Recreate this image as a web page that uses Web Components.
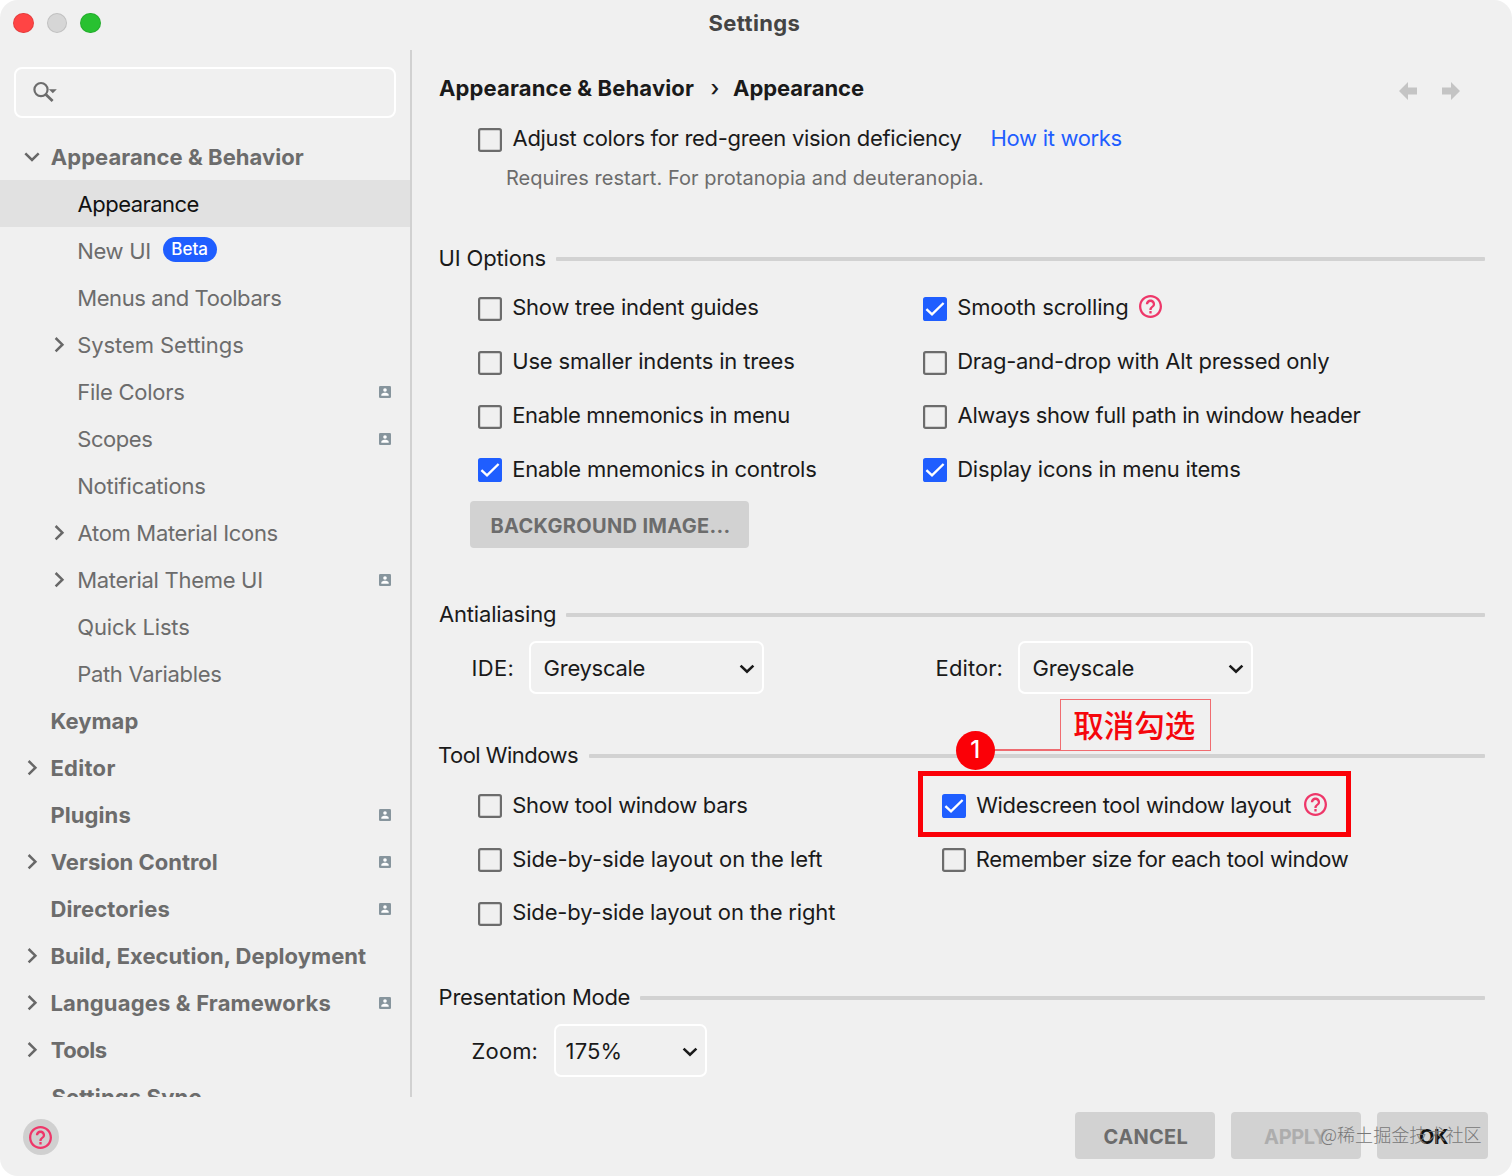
<!DOCTYPE html>
<html lang="en">

<head>
    <meta charset="UTF-8">
    <meta name="viewport" content="width=device-width, initial-scale=1.0">
    <title>Settings</title>
    <style>
        :root {
            --bg: #f0f0f0;
            --text: #1a1a1a;
            --muted: #6c6c6c;
            --line: #d2d2d2;
            --accent: #1f5eff;
            --help: #ee3769;
        }

        body {
            margin: 0;
            background: #fff;
            font: 22px/28px Inter, "Noto Sans CJK SC", sans-serif;
            color: var(--text);
        }

        .checks {
            display: grid;
            grid-template-columns: var(--col, 445px) 1fr;
            grid-auto-rows: 53.8px;
            padding-left: 39.4px;
        }

        .fields {
            display: grid;
            grid-template-columns: 464px 1fr;
            margin-top: 4px;
            padding-left: 33px;
        }
    </style>
</head>

<body>
    <settings-window>
        <text-run slot="title" w="91" style="font-weight:700;color:#444">Settings</text-run>

        <tree-item slot="tree" top open w="253">Appearance &amp; Behavior</tree-item>
        <tree-item slot="tree" selected w="121">Appearance</tree-item>
        <tree-item slot="tree" badge="Beta" w="71">New UI</tree-item>
        <tree-item slot="tree" w="203">Menus and Toolbars</tree-item>
        <tree-item slot="tree" arrow w="165">System Settings</tree-item>
        <tree-item slot="tree" project w="106">File Colors</tree-item>
        <tree-item slot="tree" project w="74">Scopes</tree-item>
        <tree-item slot="tree" w="127">Notifications</tree-item>
        <tree-item slot="tree" arrow w="200">Atom Material Icons</tree-item>
        <tree-item slot="tree" arrow project w="183">Material Theme UI</tree-item>
        <tree-item slot="tree" w="111">Quick Lists</tree-item>
        <tree-item slot="tree" w="143">Path Variables</tree-item>
        <tree-item slot="tree" top w="86">Keymap</tree-item>
        <tree-item slot="tree" top arrow w="64">Editor</tree-item>
        <tree-item slot="tree" top project w="79">Plugins</tree-item>
        <tree-item slot="tree" top arrow project w="166">Version Control</tree-item>
        <tree-item slot="tree" top project w="118">Directories</tree-item>
        <tree-item slot="tree" top arrow w="316">Build, Execution, Deployment</tree-item>
        <tree-item slot="tree" top arrow project w="279">Languages &amp; Frameworks</tree-item>
        <tree-item slot="tree" top arrow w="56">Tools</tree-item>
        <tree-item slot="tree" top w="150">Settings Sync</tree-item>

        <bread-crumb>
            <text-run w="255">Appearance &amp; Behavior</text-run>
            <text-run w="5" style="font-weight:500;margin:0 18px 0 16px">›</text-run>
            <text-run w="131">Appearance</text-run>
        </bread-crumb>

        <div class="checks" style="grid-template-columns:512px 1fr;margin-top:9.4px">
            <check-box w="449">Adjust colors for red-green vision deficiency</check-box>
            <text-run w="130" style="color:var(--accent);align-self:center;margin:-2px 0 0 .6px">How it works</text-run>
        </div>
        <text-run w="476" style="color:var(--muted);font-size:20px;line-height:24px;margin-left:67.3px">Requires restart. For protanopia and deuteranopia.</text-run>

        <section-title w="106" style="margin-top:44.5px">UI Options</section-title>
        <div class="checks" style="margin-top:.9px">
            <check-box w="245">Show tree indent guides</check-box>
            <check-box w="169" checked help>Smooth scrolling</check-box>
            <check-box w="281">Use smaller indents in trees</check-box>
            <check-box w="371">Drag-and-drop with Alt pressed only</check-box>
            <check-box w="276">Enable mnemonics in menu</check-box>
            <check-box w="403">Always show full path in window header</check-box>
            <check-box w="303" checked>Enable mnemonics in controls</check-box>
            <check-box w="282" checked>Display icons in menu items</check-box>
        </div>
        <push-button w="238" style="width:279px;margin:4.3px 0 0 31.4px">BACKGROUND IMAGE...</push-button>

        <section-title w="116" style="margin-top:43.3px">Antialiasing</section-title>
        <div class="fields">
            <combo-box label="IDE:" lw="40" w="100" style="--gap:17px;--box:235px">Greyscale</combo-box>
            <combo-box label="Editor:" lw="65" w="100" style="--gap:17px;--box:235px">Greyscale</combo-box>
        </div>

        <section-title w="139" style="margin-top:38px">Tool Windows</section-title>
        <div class="checks" style="--col:463.6px;margin-top:.6px">
            <check-box w="234">Show tool window bars</check-box>
            <check-box w="315" checked help>Widescreen tool window layout</check-box>
            <check-box w="309">Side-by-side layout on the left</check-box>
            <check-box w="372">Remember size for each tool window</check-box>
            <check-box w="322">Side-by-side layout on the right</check-box>
        </div>

        <section-title w="190" style="margin-top:34px">Presentation Mode</section-title>
        <div class="fields">
            <combo-box label="Zoom:" lw="64" w="54" style="--gap:18px;--box:153px;--pad:10px">175%</combo-box>
        </div>

        <push-button slot="actions" w="84" style="width:139.5px">CANCEL</push-button>
        <push-button slot="actions" w="64" style="width:129.5px;color:#adadad">APPLY</push-button>
        <push-button slot="actions" w="29" style="width:111px;color:#111">OK</push-button>
    </settings-window>

    <step-note number="1">取消勾选</step-note>
    <water-mark>@稀土掘金技术社区</water-mark>

    <template id="windowTemplate">
        <style>
            :host {
                display: grid;
                grid-template: 50px 1047px 79px / 412px 1fr;
                width: 1512px;
                height: 1176px;
                background: var(--bg);
                border-radius: 18px;
                overflow: hidden;
            }

            header {
                grid-column: 1 / -1;
                display: grid;
                grid-template-columns: 1fr auto 1fr;
                align-items: center;
                height: 46px;
            }

            .lights {
                display: flex;
                gap: 13px;
                padding-left: 13px;
            }

            .lights i {
                width: 20.6px;
                height: 20.6px;
                border-radius: 50%;
                box-sizing: border-box;
                border: 1px solid rgba(0, 0, 0, .1);
            }

            header slot {
                display: block;
                padding: 0 5px 1px 0;
            }

            aside {
                border-right: 2px solid #d1d1d1;
                overflow: hidden;
            }

            .search {
                box-sizing: border-box;
                height: 51px;
                margin: 17px 14px 15px;
                border: 2px solid #fff;
                border-radius: 8px;
                padding: 11px 16px;
            }

            svg {
                display: block;
            }

            main {
                padding: 23px 27px 0 27px;
                overflow: hidden;
            }

            footer {
                grid-column: 1 / -1;
                display: flex;
                justify-content: space-between;
                padding: 15px 23.6px 0 22.5px;
            }

            .actions {
                display: flex;
                gap: 16.6px;
            }

            .round {
                display: grid;
                place-items: center;
                width: 36px;
                height: 36px;
                margin-top: 7px;
                border-radius: 50%;
                background: #d0d0d0;
            }

            .round help-icon {
                margin-right: 1px;
            }
        </style>
        <header>
            <div class="lights"><i style="background:#ff4444"></i><i style="background:#d6d6d6"></i><i style="background:#28c131"></i></div>
            <slot name="title"></slot>
        </header>
        <aside>
            <div class="search">
                <svg width="26" height="24" viewBox="0 0 26 24" fill="none" stroke="#6c6c6c">
                    <circle cx="9" cy="9.6" r="6.6" stroke-width="2.2" />
                    <path d="M13.6 14.2 L20.6 21" stroke-width="2.8" />
                    <path d="M16.8 9.2 H24.8 L20.8 13.3 Z" fill="#6c6c6c" stroke="none" />
                </svg>
            </div>
            <slot name="tree"></slot>
        </aside>
        <main>
            <slot></slot>
        </main>
        <footer>
            <div class="round"><help-icon></help-icon></div>
            <div class="actions"><slot name="actions"></slot></div>
        </footer>
    </template>

    <template id="treeTemplate">
        <style>
            :host {
                display: flex;
                align-items: center;
                height: 47px;
                color: var(--muted);
                box-sizing: border-box;
                padding: 0 18.6px 0 50.6px;
            }

            :host([top]) {
                padding-left: 23.8px;
                font-weight: 700;
            }

            :host([selected]) {
                background: #e1e1e1;
                color: #111;
            }

            .arrow {
                width: 27px;
                flex: none;
            }

            svg {
                display: none;
            }

            :host([arrow]) .right,
            :host([open]) .down,
            :host([project]) .project {
                display: block;
            }

            .badge {
                margin: -2px 0 0 14px;
                width: 54px;
                border-radius: 13px;
                background: var(--accent);
                color: #fff;
                font: 500 17px/25px Inter, sans-serif;
                text-align: center;
            }

            .project {
                margin: 1px 0 0 auto;
            }
        </style>
        <span class="arrow">
            <svg class="right" width="16" height="18" fill="none" stroke="#686868" stroke-width="2.5"><path d="M4.6 2 L11.4 8.7 L4.6 15.4" /></svg>
            <svg class="down" width="16" height="18" fill="none" stroke="#686868" stroke-width="2.5"><path d="M1.3 5.3 L8 12 L14.7 5.3" /></svg>
        </span>
        <text-run><slot></slot></text-run>
        <svg class="project" width="12" height="12" viewBox="0 0 12 12">
            <rect width="12" height="12" rx="1.3" fill="#87959d" />
            <circle cx="6" cy="4" r="1.8" fill="#fff" />
            <path d="M2.3 9.7 V8.8 C2.3 7.4 4.8 6.8 6 6.8 S9.7 7.4 9.7 8.8 V9.7 Z" fill="#fff" />
        </svg>
    </template>

    <template id="checkTemplate">
        <style>
            :host {
                display: flex;
                align-items: center;
            }

            .box {
                flex: none;
                width: 24px;
                height: 24px;
                margin: 1px 10.2px 0 0;
            }

            svg {
                display: block;
            }

            .on,
            :host([checked]) .off {
                display: none;
            }

            :host([checked]) .on {
                display: block;
            }

            text-run {
                margin-top: -2px;
            }

            help-icon {
                display: none;
                margin: -3px 0 0 12.6px;
            }

            :host([help]) help-icon {
                display: block;
            }
        </style>
        <span class="box">
            <svg class="off" width="24" height="24"><rect x="1.1" y="1.1" width="21.8" height="21.8" rx="1.6" fill="none" stroke="#6c6c6c" stroke-width="2.2" /></svg>
            <svg class="on" width="24" height="24"><rect width="24" height="24" rx="2.6" fill="#1f5eff" /><path d="M3.4 12.2 L9 17.4 L20.6 6" fill="none" stroke="#fff" stroke-width="2.4" /></svg>
        </span>
        <text-run><slot></slot></text-run>
        <help-icon></help-icon>
    </template>

    <template id="comboTemplate">
        <style>
            :host {
                display: flex;
                align-items: center;
                gap: var(--gap);
            }

            .box {
                box-sizing: border-box;
                display: flex;
                align-items: center;
                justify-content: space-between;
                width: var(--box);
                height: 53px;
                border: 2px solid #fff;
                border-radius: 7px;
                padding: 0 7px 0 var(--pad, 13px);
            }
        </style>
        <text-run class="name"></text-run>
        <div class="box">
            <text-run><slot></slot></text-run>
            <svg width="16" height="12" fill="none" stroke="#1a1a1a" stroke-width="2.6"><path d="M1.6 3.6 L8 9.8 L14.4 3.6" /></svg>
        </div>
    </template>

    <script>
        const tmpl = id => document.getElementById(id).content.cloneNode(true);
        const pen = document.createElement('canvas').getContext('2d');

        // a run of text whose inked part is w pixels wide
        class TextRun extends HTMLElement {
            constructor() {
                super();
                this.attachShadow({ mode: 'open' }).innerHTML = `
                    <style>
                        :host { display: block; width: max-content; white-space: nowrap; }
                        span { display: block; }
                    </style>
                    <span><slot></slot></span>`;
            }

            connectedCallback() {
                const slot = this.querySelector('slot');
                const nodes = slot ? slot.assignedNodes() : [...this.childNodes];
                const text = nodes.map(n => n.textContent).join('').trim();
                const w = parseFloat(this.getAttribute('w'));
                if (!w || !text) return;
                const cs = getComputedStyle(this);
                pen.font = `${cs.fontWeight} ${cs.fontSize} ${cs.fontFamily}`;
                const m = pen.measureText(text);
                const ink = m.actualBoundingBoxLeft + m.actualBoundingBoxRight;
                const gap = text.length > 1 ? (w - ink) / (text.length - 1) : 0;
                const span = this.shadowRoot.querySelector('span');
                span.style.letterSpacing = gap + 'px';
                // straight stems sit a little further in than the box of A, V or T
                const nudge = /^[AVTW]/.test(text) ? 0 : 0.6;
                span.style.marginLeft = m.actualBoundingBoxLeft + nudge + 'px';
                this.style.width = w + 'px';
            }
        }

        class HelpIcon extends HTMLElement {
            constructor() {
                super();
                this.attachShadow({ mode: 'open' }).innerHTML = `
                    <style>
                        :host { display: block; }
                        svg { display: block; fill: var(--help); }
                    </style>
                    <svg width="23" height="23" viewBox="2 2 20 20"><path d="M11 18h2v-2h-2v2zm1-16C6.48 2 2 6.48 2 12s4.48 10 10 10 10-4.48 10-10S17.52 2 12 2zm0 18c-4.41 0-8-3.59-8-8s3.59-8 8-8 8 3.59 8 8-3.59 8-8 8zm0-14c-2.21 0-4 1.79-4 4h2c0-1.1.9-2 2-2s2 .9 2 2c0 2-3 1.75-3 5h2c0-2.25 3-2.5 3-5 0-2.21-1.79-4-4-4z"/></svg>`;
            }
        }

        class SettingsWindow extends HTMLElement {
            constructor() {
                super();
                this.attachShadow({ mode: 'open' }).appendChild(tmpl('windowTemplate'));
            }
        }

        class TreeItem extends HTMLElement {
            constructor() {
                super();
                const shadow = this.attachShadow({ mode: 'open' });
                shadow.appendChild(tmpl('treeTemplate'));
                const run = shadow.querySelector('text-run');
                run.setAttribute('w', this.getAttribute('w'));
                if (this.hasAttribute('badge')) {
                    const badge = document.createElement('span');
                    badge.className = 'badge';
                    badge.textContent = this.getAttribute('badge');
                    run.after(badge);
                }
            }
        }

        class BreadCrumb extends HTMLElement {
            constructor() {
                super();
                this.attachShadow({ mode: 'open' }).innerHTML = `
                    <style>
                        :host { display: flex; align-items: center; height: 30px; font-weight: 700; }
                        svg { fill: #c4c4c4; margin-top: 6px; }
                        .back { margin-left: auto; margin-right: 25px; }
                        .next { margin-right: 25px; }
                    </style>
                    <slot></slot>
                    <svg class="back" width="18" height="18"><path d="M0 9 L9 0 V5.5 H18 V12.5 H9 V18 Z"/></svg>
                    <svg class="next" width="18" height="18"><path d="M18 9 L9 0 V5.5 H0 V12.5 H9 V18 Z"/></svg>`;
            }
        }

        class SectionTitle extends HTMLElement {
            constructor() {
                super();
                this.attachShadow({ mode: 'open' }).innerHTML = `
                    <style>
                        :host { display: flex; align-items: center; gap: 11.4px; height: 46px; }
                        i { flex: 1; height: 4px; margin-top: 2px; border-radius: 1px; background: var(--line); }
                    </style>
                    <text-run w="${this.getAttribute('w')}"><slot></slot></text-run><i></i>`;
            }
        }

        class CheckBox extends HTMLElement {
            constructor() {
                super();
                const shadow = this.attachShadow({ mode: 'open' });
                shadow.appendChild(tmpl('checkTemplate'));
                shadow.querySelector('text-run').setAttribute('w', this.getAttribute('w'));
            }
        }

        class ComboBox extends HTMLElement {
            constructor() {
                super();
                const shadow = this.attachShadow({ mode: 'open' });
                shadow.appendChild(tmpl('comboTemplate'));
                const [name, value] = shadow.querySelectorAll('text-run');
                name.textContent = this.getAttribute('label');
                name.setAttribute('w', this.getAttribute('lw'));
                value.setAttribute('w', this.getAttribute('w'));
            }
        }

        class PushButton extends HTMLElement {
            constructor() {
                super();
                this.attachShadow({ mode: 'open' }).innerHTML = `
                    <style>
                        :host {
                            display: flex;
                            align-items: center;
                            justify-content: center;
                            height: 47px;
                            border-radius: 4px;
                            background: var(--line);
                            color: var(--muted);
                            font-size: 20px;
                            font-weight: 700;
                        }
                        text-run { margin-top: 2px; }
                    </style>
                    <text-run w="${this.getAttribute('w')}"><slot></slot></text-run>`;
            }
        }

        // annotation laid over the window: frame, numbered dot, leader and caption
        class StepNote extends HTMLElement {
            constructor() {
                super();
                this.attachShadow({ mode: 'open' }).innerHTML = `
                    <style>
                        :host { position: absolute; left: 918px; top: 699px; width: 433px; height: 138px; }
                        div { position: absolute; box-sizing: border-box; }
                        .frame { left: 0; top: 72px; width: 433px; height: 66px; border: 5px solid #fb0007; }
                        .line { left: 76px; top: 50px; width: 67px; height: 1.5px; background: #ee6b70; }
                        .dot {
                            left: 37.5px; top: 31.5px; width: 39.5px; height: 39.5px; border-radius: 50%;
                            background: #fb0007; color: #fff; text-align: center; font: 500 24px/38px Inter, sans-serif;
                        }
                        .note {
                            left: 141.5px; top: 0; width: 151.5px; height: 52px; border: 1.5px solid #f06c70;
                            color: #f5060c; text-align: center; font: 500 30.5px/49px "Noto Sans CJK SC", sans-serif;
                            padding-right: 2px;
                        }
                    </style>
                    <div class="frame"></div>
                    <div class="line"></div>
                    <div class="dot">${this.getAttribute('number')}</div>
                    <div class="note"><slot></slot></div>`;
            }
        }

        class WaterMark extends HTMLElement {
            constructor() {
                super();
                this.attachShadow({ mode: 'open' }).innerHTML = `
                    <style>
                        :host {
                            position: absolute; left: 1320.5px; top: 1120px; white-space: nowrap;
                            color: #777; font: 300 18.1px/28px "Noto Sans CJK SC", sans-serif;
                        }
                    </style>
                    <slot></slot>`;
            }
        }

        customElements.define('settings-window', SettingsWindow);
        customElements.define('tree-item', TreeItem);
        customElements.define('bread-crumb', BreadCrumb);
        customElements.define('section-title', SectionTitle);
        customElements.define('check-box', CheckBox);
        customElements.define('combo-box', ComboBox);
        customElements.define('push-button', PushButton);
        customElements.define('step-note', StepNote);
        customElements.define('water-mark', WaterMark);
        customElements.define('help-icon', HelpIcon);
        // last, so the slots it measures are already filled
        customElements.define('text-run', TextRun);
    </script>
</body>

</html>
